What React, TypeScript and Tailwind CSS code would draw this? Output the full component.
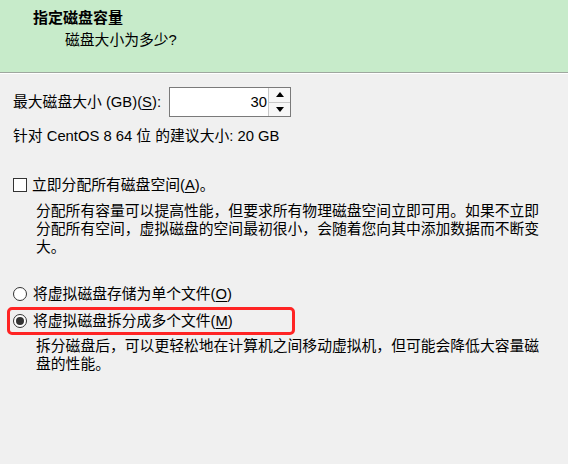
import React from 'react';

const font = { fontFamily: '"Liberation Sans", "Noto Sans CJK SC", sans-serif' };

const Key: React.FC<{ k: string }> = ({ k }) => (
  <>
    (<span className="underline underline-offset-2">{k}</span>)
  </>
);

const Radio: React.FC<{ checked?: boolean }> = ({ checked }) => (
  <span className="flex h-[14px] w-[14px] shrink-0 items-center justify-center rounded-full border border-[#333333] bg-white">
    {checked && <span className="h-[8px] w-[8px] rounded-full bg-[#333333]" />}
  </span>
);

export default function App() {
  return (
    <div className="flex h-[464px] w-[568px] flex-col overflow-hidden bg-[#f0f0f0] text-[14.8px] leading-[18px] text-black" style={font}>
      <div className="h-[73px] shrink-0 border-b border-[#9fa79f] bg-[#c7ebca] pl-[33px] pt-[9px]">
        <div className="text-[15px] font-bold">指定磁盘容量</div>
        <div className="mt-[4px] pl-[32px]">磁盘大小为多少?</div>
      </div>
      <div className="h-px shrink-0 bg-white" />

      <div className="flex flex-col px-[13px]">
        <div className="mt-[13px] flex h-[30px] items-center">
          <span className="w-[156px] shrink-0">
            最大磁盘大小 (GB)<Key k="S" />:
          </span>
          <div className="flex h-[30px] w-[122px] border border-[#7a7a7a] bg-white">
            <div className="flex flex-1 items-center justify-end pr-[1px]">30</div>
            <div className="flex w-[22px] flex-col border-l border-[#c8c8c8]">
              <button className="flex flex-1 items-center justify-center border-b border-[#c8c8c8] bg-[#f7f7f7]">
                <svg width="8" height="5" viewBox="0 0 8 5">
                  <path d="M4 0 L8 5 L0 5 Z" fill="#000" />
                </svg>
              </button>
              <button className="flex flex-1 items-center justify-center bg-[#f7f7f7]">
                <svg width="8" height="5" viewBox="0 0 8 5">
                  <path d="M0 0 L8 0 L4 5 Z" fill="#000" />
                </svg>
              </button>
            </div>
          </div>
        </div>

        <div className="mt-[10px]">针对 CentOS 8 64 位 的建议大小: 20 GB</div>

        <div className="mt-[31px] flex items-center gap-[5px]">
          <span className="h-[14px] w-[14px] shrink-0 border border-[#333333] bg-white" />
          <span>
            立即分配所有磁盘空间<Key k="A" />。
          </span>
        </div>
        <p className="ml-[23px] mt-[8px] w-[516px]">
          分配所有容量可以提高性能，但要求所有物理磁盘空间立即可用。如果不立即分配所有空间，虚拟磁盘的空间最初很小，会随着您向其中添加数据而不断变大。
        </p>

        <div className="mt-[29px] flex items-center gap-[6px]">
          <Radio />
          <span>
            将虚拟磁盘存储为单个文件<Key k="O" />
          </span>
        </div>
        <div className="-ml-[6px] mt-[4px] flex h-[28px] w-[288px] items-center gap-[6px] rounded-[5px] border-[3px] border-[#ff2424] pl-[3px]">
          <Radio checked />
          <span>
            将虚拟磁盘拆分成多个文件<Key k="M" />
          </span>
        </div>
        <p className="ml-[23px] mt-[2px] w-[516px]">
          拆分磁盘后，可以更轻松地在计算机之间移动虚拟机，但可能会降低大容量磁盘的性能。
        </p>
      </div>
    </div>
  );
}
